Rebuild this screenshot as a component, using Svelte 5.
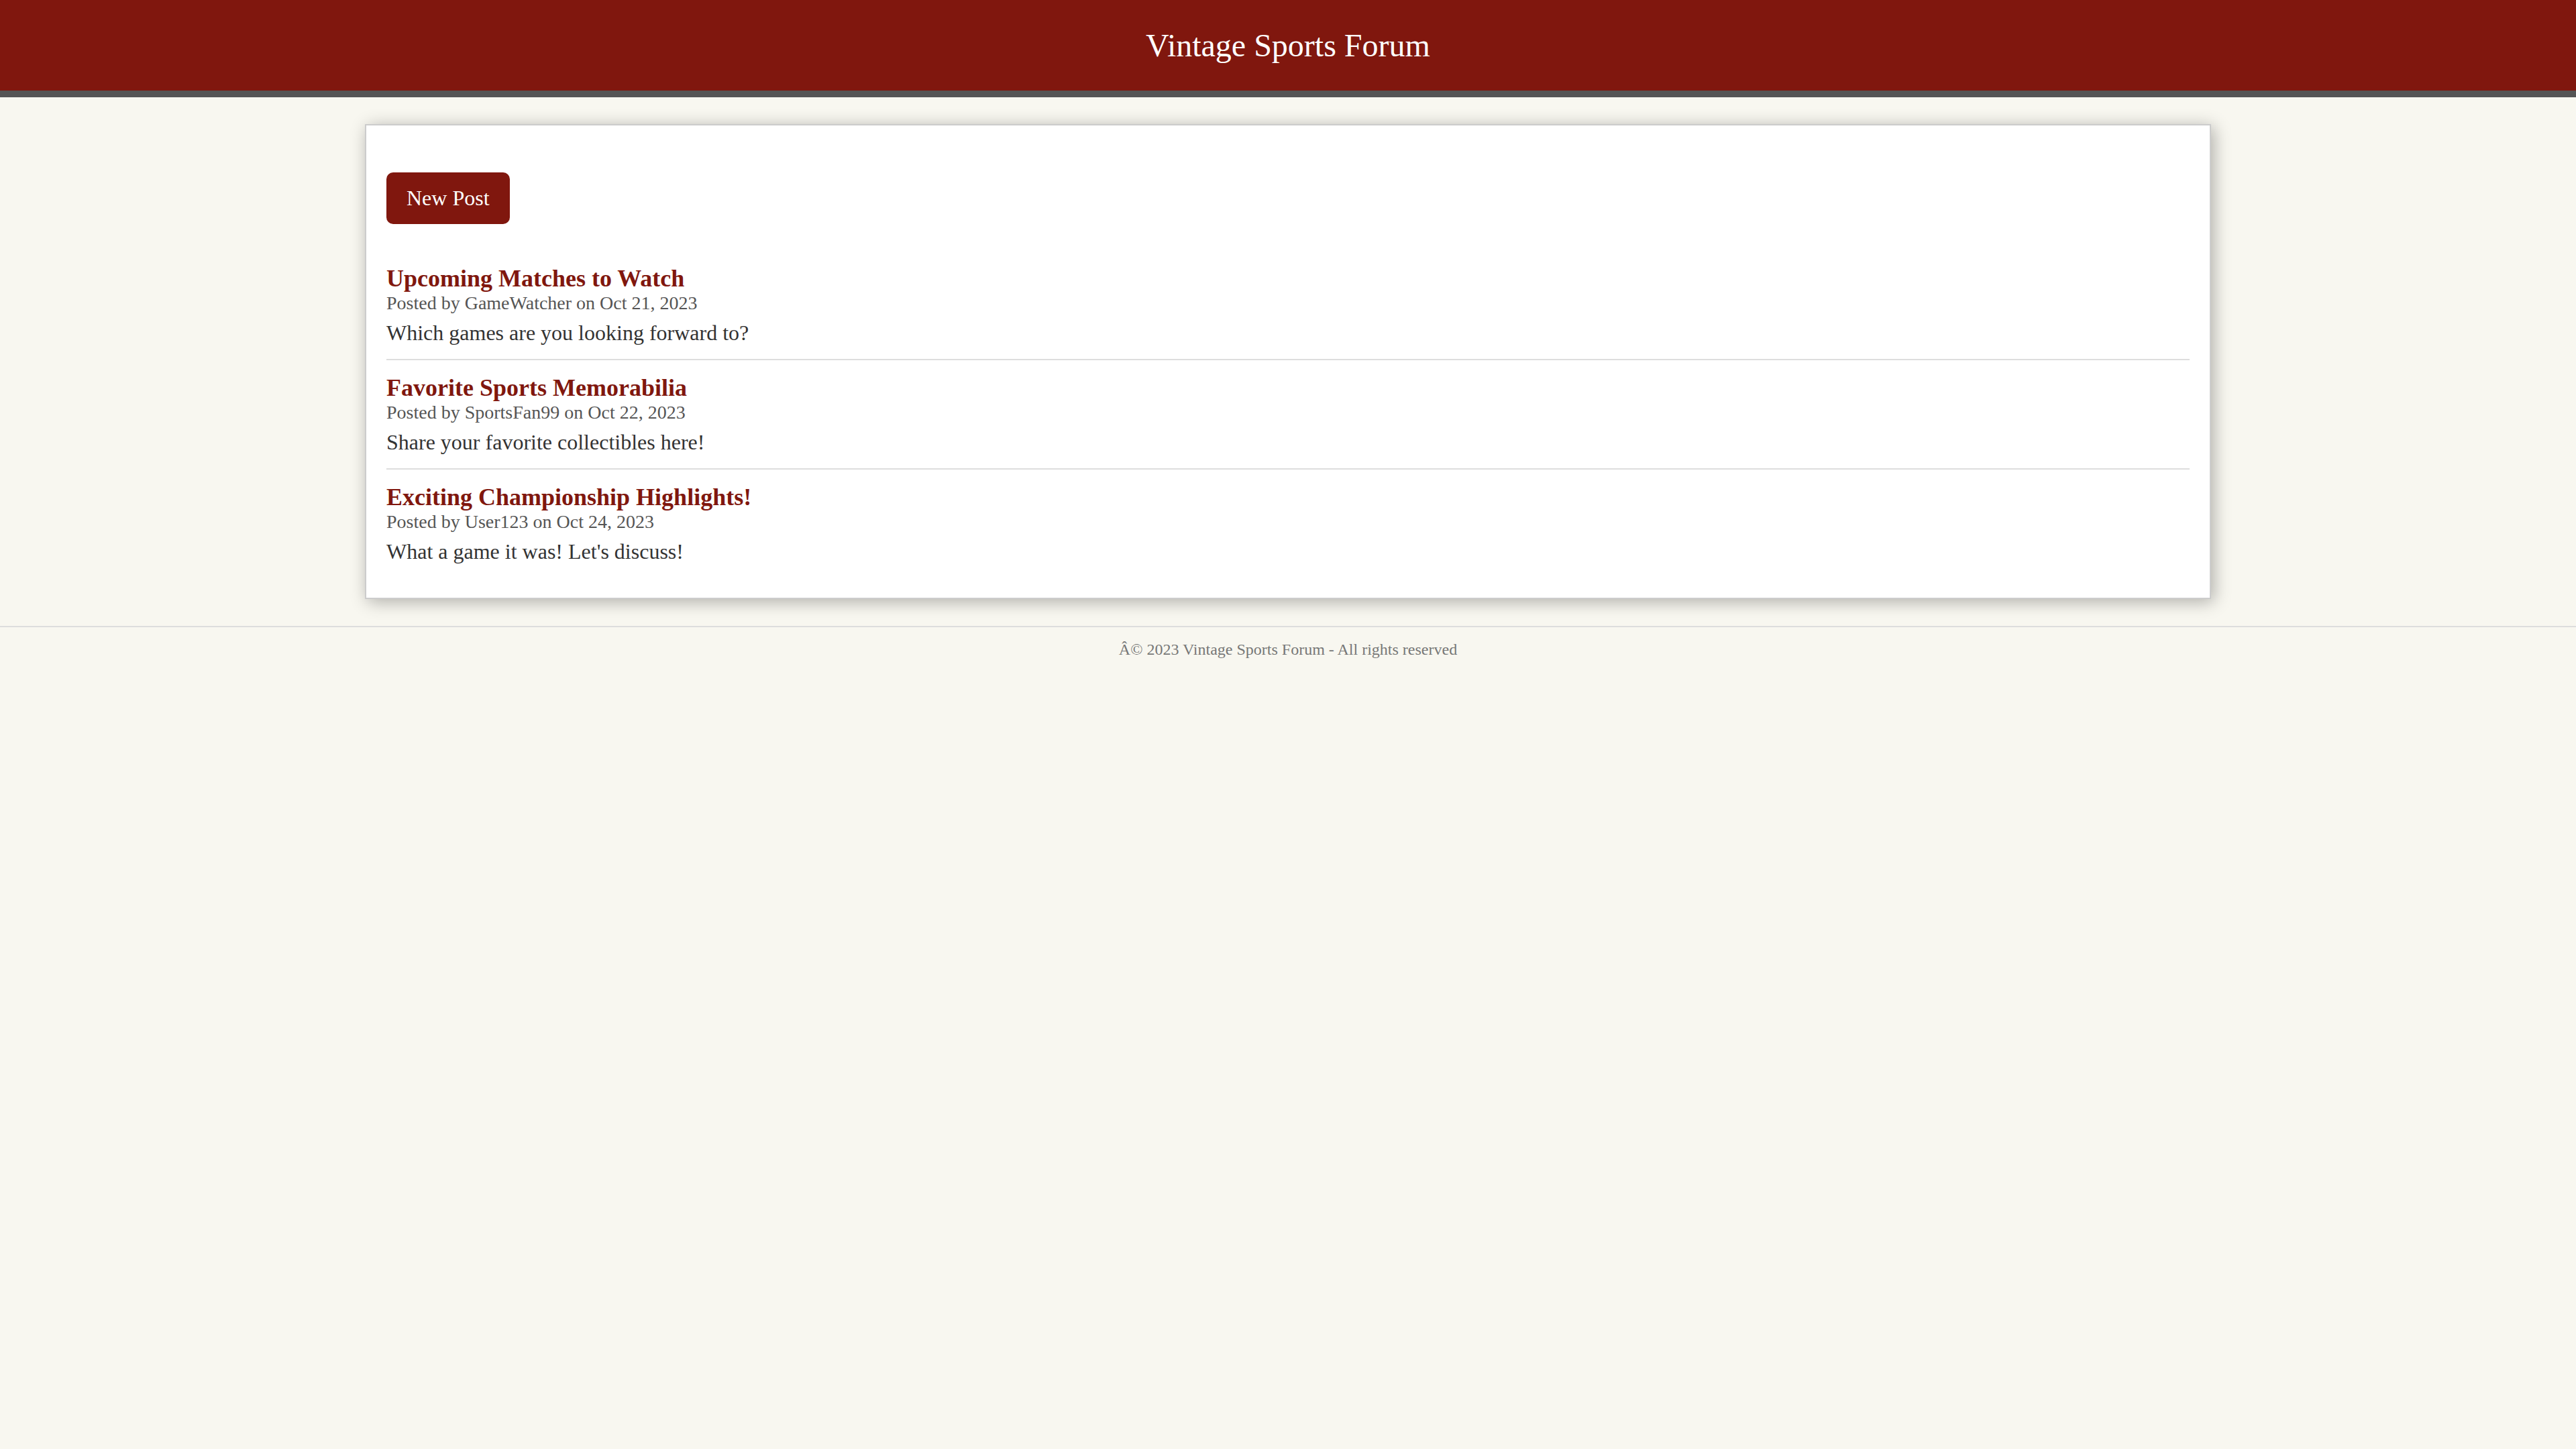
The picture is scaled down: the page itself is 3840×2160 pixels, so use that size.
<script>
  const posts = [
    {
      title: 'Upcoming Matches to Watch',
      author: 'GameWatcher',
      date: 'Oct 21, 2023',
      body: 'Which games are you looking forward to?'
    },
    {
      title: 'Favorite Sports Memorabilia',
      author: 'SportsFan99',
      date: 'Oct 22, 2023',
      body: 'Share your favorite collectibles here!'
    },
    {
      title: 'Exciting Championship Highlights!',
      author: 'User123',
      date: 'Oct 24, 2023',
      body: "What a game it was! Let's discuss!"
    }
  ];
</script>

<header>
  <h1>Vintage Sports Forum</h1>
</header>

<main>
  <button type="button">New Post</button>
  {#each posts as post}
    <article>
      <h2>{post.title}</h2>
      <p class="meta">Posted by {post.author} on {post.date}</p>
      <p class="body">{post.body}</p>
    </article>
  {/each}
</main>

<footer>Â© 2023 Vintage Sports Forum - All rights reserved</footer>

<style>
  :global(body) {
    margin: 0;
    background: #f8f7f0;
    color: #333;
    font-family: 'Liberation Serif', 'Times New Roman', serif;
    font-size: 32px;
  }

  header {
    padding: 40px;
    border-bottom: 10px solid #555;
    background: #80170e;
    color: #fff;
    text-align: center;
  }

  h1,
  h2,
  p {
    margin: 0;
  }

  h1 {
    font-size: 48px;
    font-weight: 400;
    line-height: 55px;
  }

  main {
    box-sizing: content-box;
    width: 70%;
    margin: 40px auto;
    padding: 30px;
    border: 2px solid #ccc;
    background: #fff;
    box-shadow: 4px 4px 24px rgba(0, 0, 0, 0.3);
  }

  button {
    display: block;
    margin: 40px 0;
    padding: 20px 30px;
    border: 0;
    border-radius: 10px;
    background: #80170e;
    color: #fff;
    font: inherit;
    line-height: 37px;
    cursor: pointer;
  }

  article {
    padding: 20px 0;
    border-bottom: 2px solid #ddd;
  }

  article:last-child {
    border-bottom: 0;
  }

  h2 {
    color: #80170e;
    font-size: 36px;
    line-height: 42px;
  }

  .meta {
    color: #555;
    font-size: 28px;
    line-height: 32px;
  }

  .body {
    margin-top: 10px;
    line-height: 37px;
  }

  footer {
    padding: 20px;
    border-top: 2px solid #ddd;
    color: #777;
    font-size: 24px;
    line-height: 27px;
    text-align: center;
  }
</style>
